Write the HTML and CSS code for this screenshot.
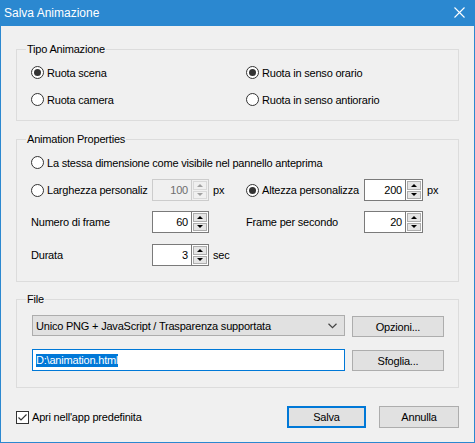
FILE: index.html
```html
<!DOCTYPE html>
<html lang="it">
<head>
  <meta charset="UTF-8" />
  <title>Salva Animazione</title>
  <link rel="stylesheet" href="styles.css">
</head>
<body>
  <div class="window">
    <div class="titlebar">
      <span class="title">Salva Animazione</span>
      <svg class="close" width="11" height="11" viewBox="0 0 11 11">
        <path d="M0.5 0.5L10.5 10.5M10.5 0.5L0.5 10.5" stroke="#fff" stroke-width="1.1" fill="none"/>
      </svg>
    </div>

    <div class="client">
      <section class="group group-type">
        <span class="legend">Tipo Animazione</span>
        <div class="two-cols">
          <label class="radio checked"><span class="dot"></span>Ruota scena</label>
          <label class="radio checked"><span class="dot"></span>Ruota in senso orario</label>
          <label class="radio"><span class="dot"></span>Ruota camera</label>
          <label class="radio"><span class="dot"></span>Ruota in senso antiorario</label>
        </div>
      </section>

      <section class="group group-props">
        <span class="legend">Animation Properties</span>
        <label class="radio row-first"><span class="dot"></span>La stessa dimensione come visibile nel pannello anteprima</label>

        <div class="prop-row row-size">
          <label class="radio"><span class="dot"></span>Larghezza personaliz</label>
          <div class="spin disabled">
            <span class="val">100</span>
            <span class="arrows"><span class="up"></span><span class="down"></span></span>
          </div>
          <span class="unit">px</span>
          <label class="radio checked"><span class="dot"></span>Altezza personalizza</label>
          <div class="spin wide">
            <span class="val">200</span>
            <span class="arrows"><span class="up"></span><span class="down"></span></span>
          </div>
          <span class="unit">px</span>
        </div>

        <div class="prop-row row-frames">
          <span class="text">Numero di frame</span>
          <div class="spin">
            <span class="val">60</span>
            <span class="arrows"><span class="up"></span><span class="down"></span></span>
          </div>
          <span class="unit"></span>
          <span class="text">Frame per secondo</span>
          <div class="spin wide">
            <span class="val">20</span>
            <span class="arrows"><span class="up"></span><span class="down"></span></span>
          </div>
          <span class="unit"></span>
        </div>

        <div class="prop-row row-duration">
          <span class="text">Durata</span>
          <div class="spin">
            <span class="val">3</span>
            <span class="arrows"><span class="up"></span><span class="down"></span></span>
          </div>
          <span class="unit">sec</span>
        </div>
      </section>

      <section class="group group-file">
        <span class="legend">File</span>
        <div class="file-row">
          <div class="combo">
            <span>Unico PNG + JavaScript / Trasparenza supportata</span>
            <svg width="9" height="6" viewBox="0 0 9 6"><path d="M0.5 0.8L4.5 4.6L8.5 0.8" stroke="#444" stroke-width="1.2" fill="none"/></svg>
          </div>
          <button class="btn">Opzioni...</button>
        </div>
        <div class="file-row row-path">
          <div class="edit"><span class="sel">D:\animation.html</span></div>
          <button class="btn">Sfoglia...</button>
        </div>
      </section>

      <div class="footer">
        <label class="check">
          <span class="box">
            <svg width="11" height="11" viewBox="0 0 11 11"><path d="M1.5 5.5L4 8L9.5 2.5" stroke="#333" stroke-width="1.2" fill="none"/></svg>
          </span>
          Apri nell'app predefinita
        </label>
        <div class="actions">
          <button class="btn btn-default">Salva</button>
          <button class="btn btn-cancel">Annulla</button>
        </div>
      </div>
    </div>
  </div>
</body>
</html>
```

FILE: styles.css
```css
* {
  box-sizing: border-box;
}

body {
  margin: 0;
  font-family: "Segoe UI", "Liberation Sans", Arial, sans-serif;
  font-size: 11px;
  letter-spacing: -0.2px;
  color: #000;
  background: #fff;
}

.window {
  width: 475px;
  height: 443px;
  border: 1px solid #2b88d0;
  border-top: none;
  display: flex;
  flex-direction: column;
}

.titlebar {
  height: 26px;
  background: #2b88d0;
  display: flex;
  align-items: center;
  justify-content: space-between;
  padding: 0 9px 1px 3px;
}

.title {
  color: #fff;
  font-size: 12px;
  letter-spacing: 0;
}

.close {
  display: block;
}

.client {
  flex: 1;
  background: #f0f0f0;
  padding: 23px 15px 0 15px;
}

/* group boxes */
.group {
  position: relative;
  border: 1px solid #dcdcdc;
}

.legend {
  position: absolute;
  top: -8px;
  left: 9px;
  padding: 0 1px;
  line-height: 15px;
  background: #f0f0f0;
}

.group-type {
  height: 72px;
  padding: 14px 14px 0 14px;
}

.group-props {
  height: 143px;
  margin-top: 18px;
  padding: 14px 14px 0 14px;
}

.group-file {
  height: 89px;
  margin-top: 17px;
  padding: 15px 14px 0 15px;
}

.two-cols {
  display: grid;
  grid-template-columns: 215px 1fr;
  grid-auto-rows: 17px;
  row-gap: 10px;
}

/* radios */
.radio {
  display: flex;
  align-items: center;
  gap: 3px;
  height: 17px;
  white-space: nowrap;
}

.dot {
  flex: none;
  width: 13px;
  height: 13px;
  border: 1px solid #333;
  border-radius: 50%;
  background: #fff;
  display: flex;
  align-items: center;
  justify-content: center;
}

.radio.checked .dot::after {
  content: "";
  width: 7px;
  height: 7px;
  border-radius: 50%;
  background: #333;
}

/* property rows */
.prop-row {
  display: grid;
  grid-template-columns: 121px 57px 37px 118px 59px auto;
  align-items: center;
  height: 22px;
}

.row-size {
  margin-top: 8px;
}

.row-frames {
  margin-top: 10px;
}

.row-duration {
  margin-top: 11px;
}

.unit {
  padding-left: 4px;
}

/* spin boxes */
.spin {
  display: flex;
  height: 22px;
  width: 57px;
}

.spin.wide {
  width: 59px;
}

.spin .val {
  flex: 1;
  border: 1px solid #7a7a7a;
  background: #fff;
  text-align: right;
  padding-right: 3px;
  line-height: 20px;
}

.arrows {
  width: 17px;
  border: 1px solid #7a7a7a;
  border-left: none;
  display: flex;
  flex-direction: column;
  gap: 1px;
  padding: 1px;
  background: #fff;
}

.arrows span {
  flex: 1;
  border: 1px solid #adadad;
  background: #e5e5e5;
  display: flex;
  align-items: center;
  justify-content: center;
}

.arrows .up::after,
.arrows .down::after {
  content: "";
  border-left: 3px solid transparent;
  border-right: 3px solid transparent;
}

.arrows .up::after {
  border-bottom: 3px solid #000;
}

.arrows .down::after {
  border-top: 3px solid #000;
}

.spin.disabled .val {
  background: #f0f0f0;
  border-color: #cccccc;
  color: #6d6d6d;
}

.spin.disabled .arrows {
  border-color: #cccccc;
  background: #f0f0f0;
}

.spin.disabled .arrows span {
  border-color: #d9d9d9;
  background: #f0f0f0;
}

.spin.disabled .arrows .up::after {
  border-bottom-color: #a0a0a0;
}

.spin.disabled .arrows .down::after {
  border-top-color: #a0a0a0;
}

/* file section */
.file-row {
  display: flex;
  gap: 7px;
  align-items: flex-start;
  height: 22px;
}

.row-path {
  margin-top: 12px;
}

.combo {
  width: 313px;
  height: 21px;
  background: #e1e1e1;
  border: 1px solid #adadad;
  display: flex;
  align-items: center;
  justify-content: space-between;
  padding: 0 7px 0 3px;
}

.combo svg {
  display: block;
}

.edit {
  width: 313px;
  height: 22px;
  border: 1px solid #0078d7;
  background: #fff;
  padding-left: 3px;
  display: flex;
  align-items: center;
}

.sel {
  background: #0078d7;
  color: #fff;
  line-height: 13px;
}

.btn {
  font: inherit;
  letter-spacing: inherit;
  color: #000;
  width: 92px;
  height: 21px;
  margin-top: 1px;
  padding: 0;
  background: #e1e1e1;
  border: 1px solid #adadad;
}

/* footer */
.footer {
  display: flex;
  align-items: center;
  justify-content: space-between;
  height: 22px;
  margin-top: 18px;
}

.check {
  display: flex;
  align-items: center;
  gap: 3px;
}

.box {
  width: 13px;
  height: 13px;
  border: 1px solid #333;
  background: #fff;
  display: flex;
  align-items: center;
  justify-content: center;
}

.box svg {
  display: block;
}

.actions {
  display: flex;
  gap: 13px;
}

.actions .btn {
  height: 22px;
  margin-top: 0;
}

.btn-default {
  width: 79px;
  border: 2px solid #0078d7;
}

.btn-cancel {
  width: 80px;
}
```
